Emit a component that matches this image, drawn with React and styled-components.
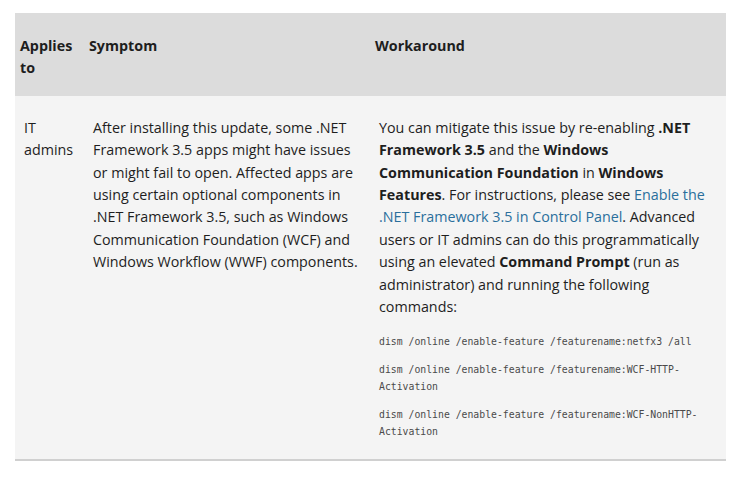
import React from 'react';
import styled, { createGlobalStyle } from 'styled-components';

const GlobalStyle = createGlobalStyle`
    body {
        margin: 0;
        background: #fff;
        font-family: "Open Sans", "Noto Sans", sans-serif;
        color: #1e1e1e;
    }
`;

const Page = styled.div`
    padding: 13px 14px 0 15px;
`;

const Table = styled.table`
    width: 711px;
    border-collapse: collapse;
    table-layout: fixed;
    font-size: 14.3px;
    line-height: 22.4px;
    border-bottom: 2px solid #d0d0d0;
`;

const HeadRow = styled.tr`
    background: #dcdcdc;
`;

const Th = styled.th`
    box-sizing: border-box;
    text-align: left;
    vertical-align: top;
    font-weight: 700;
    padding: 22px 5px 16px 5px;
    width: ${({ w }) => w}px;
`;

const BodyRow = styled.tr`
    background: #f4f4f4;
`;

const Td = styled.td`
    box-sizing: border-box;
    vertical-align: top;
    padding: 21px 8px 19px 9px;
`;

const Link = styled.a`
    color: #2a6f9c;
    text-decoration: none;
`;

const Commands = styled.div`
    padding-top: 4px;
`;

const Code = styled.p`
    font-family: "DejaVu Sans Mono", "Liberation Mono", monospace;
    font-size: 9.8px;
    line-height: 17px;
    color: #4a4a4a;
    margin: 11px 0 0;
`;

const Para = styled.p`
    margin: 0;
`;

function App() {
    return (
        <Page>
            <GlobalStyle />
            <Table>
                <thead>
                    <HeadRow>
                        <Th w={69}>Applies to</Th>
                        <Th w={286}>Symptom</Th>
                        <Th w={356}>Workaround</Th>
                    </HeadRow>
                </thead>
                <tbody>
                    <BodyRow>
                        <Td>IT admins</Td>
                        <Td>
                            After installing this update, some .NET Framework 3.5 apps might have issues or might fail to open. Affected apps are using certain optional components in .NET Framework 3.5, such as Windows Communication Foundation (WCF) and Windows Workflow (WWF) components.
                        </Td>
                        <Td>
                            <Para>
                                You can mitigate this issue by re-enabling <b>.NET Framework 3.5</b> and the <b>Windows Communication Foundation</b> in <b>Windows Features</b>. For instructions, please see <Link href="#">Enable the .NET Framework 3.5 in Control Panel</Link>. Advanced users or IT admins can do this programmatically using an elevated <b>Command Prompt</b> (run as administrator) and running the following commands:
                            </Para>
                            <Commands>
                                <Code>dism /online /enable-feature /featurename:netfx3 /all</Code>
                                <Code>dism /online /enable-feature /featurename:WCF-HTTP-Activation</Code>
                                <Code>dism /online /enable-feature /featurename:WCF-NonHTTP-Activation</Code>
                            </Commands>
                        </Td>
                    </BodyRow>
                </tbody>
            </Table>
        </Page>
    );
}

export default App;
